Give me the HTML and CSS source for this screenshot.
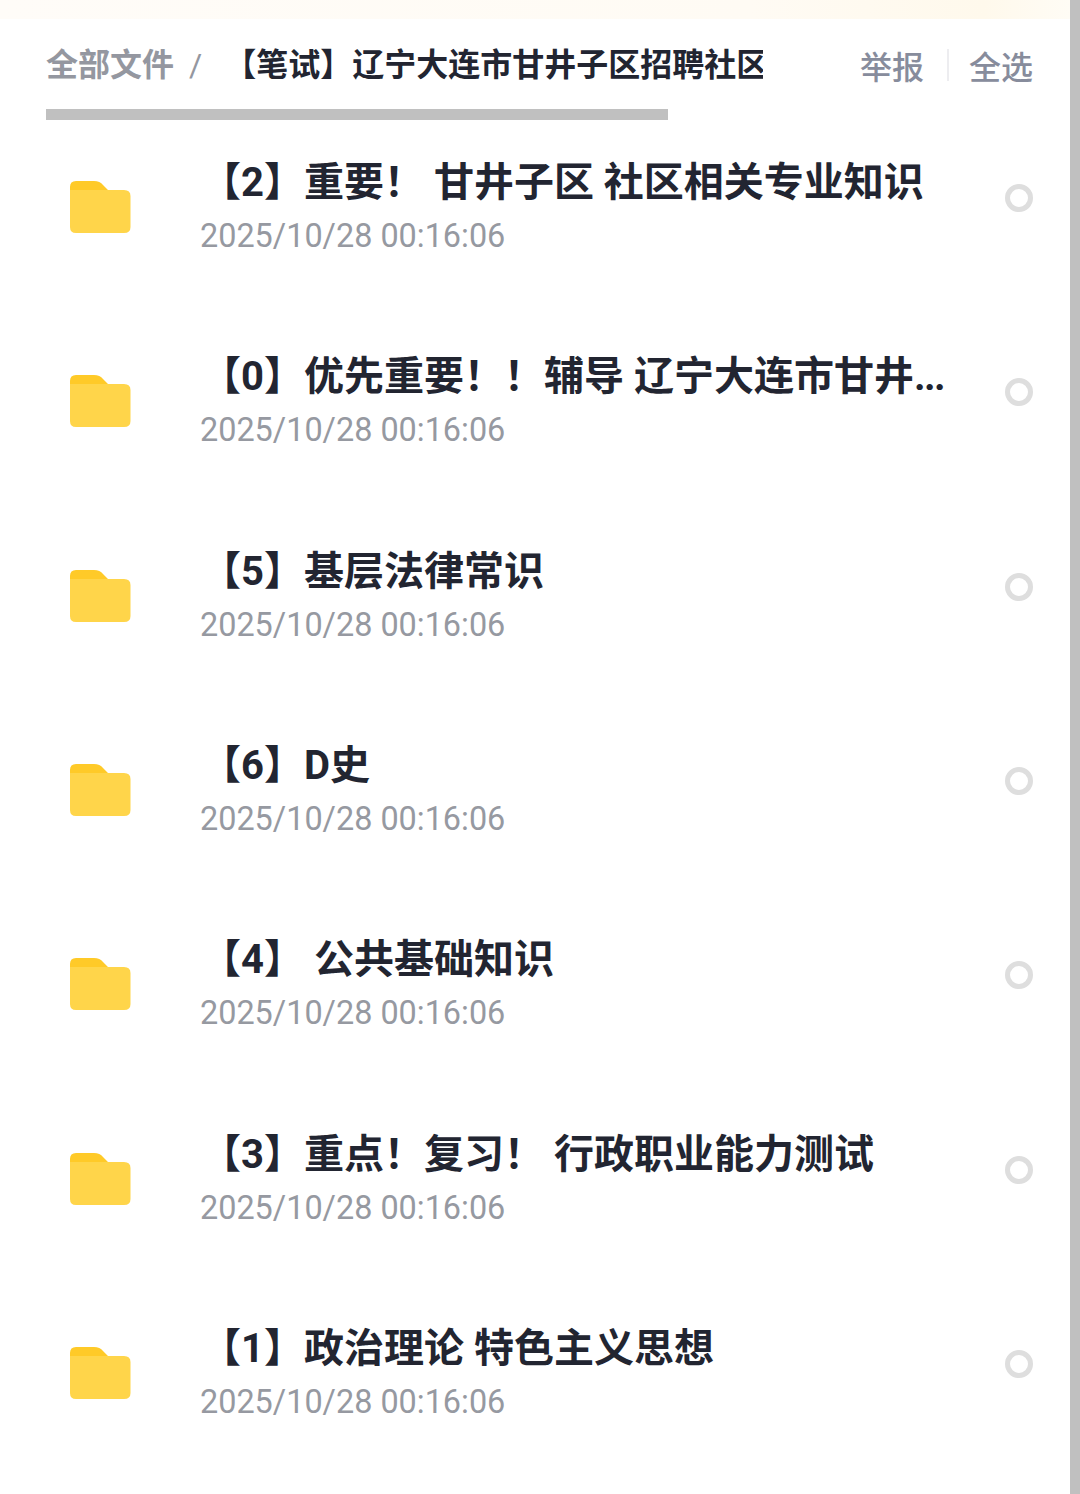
FILE: index.html
```html
<!DOCTYPE html>
<html lang="zh-CN">
<head>
    <meta charset="UTF-8">
    <meta name="viewport" content="width=device-width, initial-scale=1.0">
    <title>全部文件</title>
    <link rel="stylesheet" href="styles.css">
</head>
<body>
    <svg class="sprite" width="0" height="0">
        <symbol id="folder" viewBox="0 0 62 54">
            <path fill="#ffca28" d="M1 7Q1 1 7 1H25Q31 1 34 5L39 10V30H1Z"/>
            <path fill="#ffd54a" d="M1 10H55Q61.500 10 61.500 16V47Q61.500 53 55 53H7Q1 53 1 47Z"/>
        </symbol>
    </svg>
    <div class="page">
        <div class="banner"></div>
        <header class="toolbar">
            <nav class="breadcrumb">
                <div class="crumbs">
                    <span class="crumb-root">全部文件</span>
                    <span class="crumb-sep">/</span>
                    <span class="crumb-current">【笔试】辽宁大连市甘井子区招聘社区</span>
                </div>
                <div class="crumb-scroll"></div>
            </nav>
            <div class="actions">
                <span>举报</span>
                <span class="divider"></span>
                <span>全选</span>
            </div>
        </header>
        <ul class="file-list">
            <li class="file">
                <svg class="folder"><use href="#folder"/></svg>
                <div class="info">
                    <div class="name">【2】重要！ 甘井子区 社区相关专业知识</div>
                    <div class="date">2025/10/28 00:16:06</div>
                </div>
                <span class="radio"></span>
            </li>
            <li class="file">
                <svg class="folder"><use href="#folder"/></svg>
                <div class="info">
                    <div class="name">【0】优先重要！！辅导 辽宁大连市甘井<span class="dots">...</span></div>
                    <div class="date">2025/10/28 00:16:06</div>
                </div>
                <span class="radio"></span>
            </li>
            <li class="file">
                <svg class="folder"><use href="#folder"/></svg>
                <div class="info">
                    <div class="name">【5】基层法律常识</div>
                    <div class="date">2025/10/28 00:16:06</div>
                </div>
                <span class="radio"></span>
            </li>
            <li class="file">
                <svg class="folder"><use href="#folder"/></svg>
                <div class="info">
                    <div class="name">【6】D史</div>
                    <div class="date">2025/10/28 00:16:06</div>
                </div>
                <span class="radio"></span>
            </li>
            <li class="file">
                <svg class="folder"><use href="#folder"/></svg>
                <div class="info">
                    <div class="name">【4】 公共基础知识</div>
                    <div class="date">2025/10/28 00:16:06</div>
                </div>
                <span class="radio"></span>
            </li>
            <li class="file">
                <svg class="folder"><use href="#folder"/></svg>
                <div class="info">
                    <div class="name">【3】重点！复习！ 行政职业能力测试</div>
                    <div class="date">2025/10/28 00:16:06</div>
                </div>
                <span class="radio"></span>
            </li>
            <li class="file">
                <svg class="folder"><use href="#folder"/></svg>
                <div class="info">
                    <div class="name">【1】政治理论 特色主义思想</div>
                    <div class="date">2025/10/28 00:16:06</div>
                </div>
                <span class="radio"></span>
            </li>
        </ul>
    </div>
</body>
</html>
```
FILE: styles.css
```css
* {
    box-sizing: border-box;
}
body {
    margin: 0;
    background: #fff;
    font-family: Roboto, "Noto Sans CJK SC", sans-serif;
    color: #222531;
}
.sprite {
    display: block;
}
.page {
    height: 1494px;
    border-right: 10px solid #c0c0c0;
    overflow: hidden;
}
.banner {
    height: 19px;
    background: linear-gradient(to right, #fffcf8, #fffbf4 70%, #fff9ec 92%, #fffcf5);
}
.toolbar {
    display: flex;
    justify-content: space-between;
    height: 101px;
    padding: 0 37px 0 46px;
}
.breadcrumb {
    width: 717px;
    overflow: hidden;
}
.crumbs {
    display: flex;
    height: 90px;
    line-height: 92px;
    font-size: 32px;
    font-weight: 700;
    white-space: nowrap;
}
.crumb-root {
    color: #9497a0;
}
.crumb-sep {
    margin: 0 22px 0 15px;
    font-weight: 400;
    color: #9497a0;
}
.crumb-scroll {
    width: 622px;
    height: 11px;
    background: #c0c0c0;
}
.actions {
    display: flex;
    align-items: center;
    height: 92px;
    font-size: 32px;
    font-weight: 500;
    color: #878c9c;
}
.divider {
    width: 2px;
    height: 32px;
    margin: 0 20px 0 23px;
    background: #ededf0;
}
.file-list {
    margin: 0;
    padding: 0;
    list-style: none;
}
.file {
    display: flex;
    height: 194.33px;
    padding: 32px 37px 0 69px;
}
.folder {
    width: 62px;
    height: 54px;
    margin: 28px 69px 0 0;
}
.info {
    flex: 1;
    white-space: nowrap;
}
.name {
    height: 60px;
    padding-left: 1px;
    line-height: 62px;
    font-size: 40px;
    font-weight: 700;
}
.dots {
    letter-spacing: -1.5px;
}
.date {
    height: 48px;
    line-height: 48px;
    font-size: 32.4px;
    color: #9699a1;
}
.radio {
    width: 28px;
    height: 28px;
    margin-top: 32px;
    border: 5px solid #dedede;
    border-radius: 50%;
}
```
